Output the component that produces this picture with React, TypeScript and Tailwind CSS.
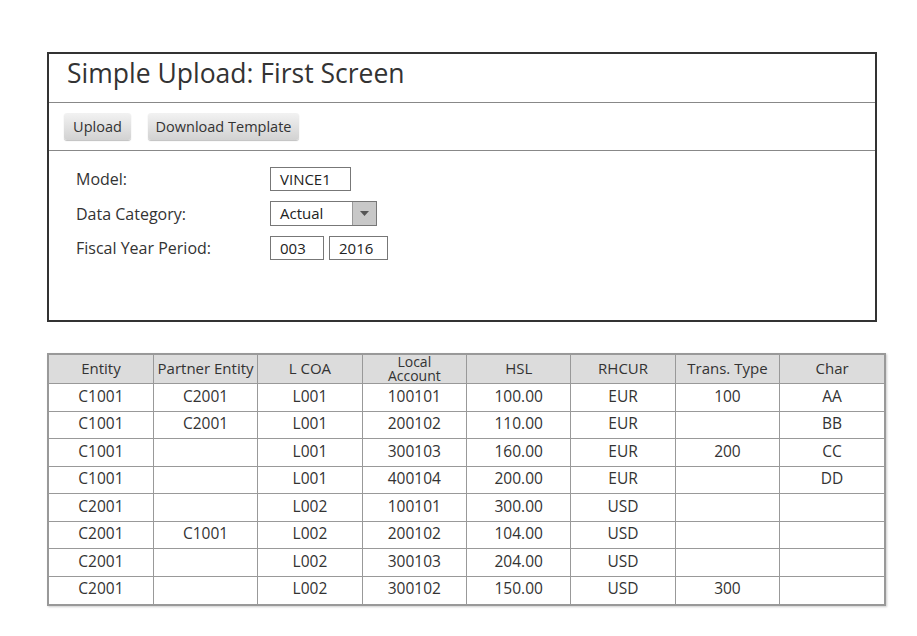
import React from "react";

const columns = ["Entity", "Partner Entity", "L COA", "Local Account", "HSL", "RHCUR", "Trans. Type", "Char"];

const rows = [
  ["C1001", "C2001", "L001", "100101", "100.00", "EUR", "100", "AA"],
  ["C1001", "C2001", "L001", "200102", "110.00", "EUR", "", "BB"],
  ["C1001", "", "L001", "300103", "160.00", "EUR", "200", "CC"],
  ["C1001", "", "L001", "400104", "200.00", "EUR", "", "DD"],
  ["C2001", "", "L002", "100101", "300.00", "USD", "", ""],
  ["C2001", "C1001", "L002", "200102", "104.00", "USD", "", ""],
  ["C2001", "", "L002", "300103", "204.00", "USD", "", ""],
  ["C2001", "", "L002", "300102", "150.00", "USD", "300", ""],
];

const Button = ({ label, width }: { label: string; width: string }) => (
  <button
    className={`${width} h-[27px] rounded-[3px] bg-gradient-to-b from-[#f2f2f2] to-[#d2d2d2] text-[14.5px] text-[#333] shadow-[0_1px_1px_rgba(0,0,0,0.25)]`}
  >
    {label}
  </button>
);

const Box = ({ value, width }: { value: string; width: string }) => (
  <div className={`${width} h-[24px] border border-[#777] bg-white pl-[9px] text-[15px] leading-[22px] text-[#222]`}>{value}</div>
);

export default function App() {
  return (
    <div className="min-h-[636px] w-[917px] bg-white pt-[52px] pl-[47px] text-[#333]" style={{ fontFamily: "'Open Sans', 'Noto Sans', sans-serif" }}>
      {/* Form panel */}
      <div className="h-[270px] w-[830px] border-2 border-[#333]">
        <div className="flex h-[49px] items-center border-b border-[#888] pb-[9px] pl-[18px]">
          <h1 className="text-[26.5px] text-[#333]">Simple Upload: First Screen</h1>
        </div>
        <div className="flex h-[48px] items-center gap-[17px] border-b border-[#888] pl-[15px]">
          <Button label="Upload" width="w-[67px]" />
          <Button label="Download Template" width="w-[151px]" />
        </div>
        <div className="flex flex-col gap-[10px] pt-[16px] pl-[27px] text-[16px]">
          <div className="flex items-center">
            <span className="w-[194px]">Model:</span>
            <Box value="VINCE1" width="w-[81px]" />
          </div>
          <div className="flex items-center">
            <span className="w-[194px]">Data Category:</span>
            <div className="flex h-[25px] w-[107px] border border-[#777] bg-white">
              <span className="flex-1 pl-[9px] text-[15px] leading-[23px] text-[#222]">Actual</span>
              <span className="flex w-[24px] items-center justify-center border-l border-[#999] bg-[#c8c8c8]">
                <svg width="9" height="5" viewBox="0 0 9 5">
                  <path d="M0 0h9L4.5 5z" fill="#555" />
                </svg>
              </span>
            </div>
          </div>
          <div className="flex items-center">
            <span className="w-[194px]">Fiscal Year Period:</span>
            <div className="flex gap-[5px]">
              <Box value="003" width="w-[54px]" />
              <Box value="2016" width="w-[59px]" />
            </div>
          </div>
        </div>
      </div>

      {/* Data table */}
      <div className="mt-[31px] w-[839px] border-2 border-[#999] shadow-[1px_1px_2px_rgba(0,0,0,0.2)]">
        <table className="w-full table-fixed border-collapse text-[15.5px] text-[#333]">
          <thead>
            <tr className="bg-[#dcdcdc]">
              {columns.map((c, i) => (
                <th key={c} className={`h-[28px] border-b border-[#999] p-0 text-[15px] font-normal ${i > 0 ? "border-l" : ""}`}>
                  {c === "Local Account" ? (
                    <div className="flex h-[28px] flex-col items-center justify-center text-[14px] leading-[14px]">
                      <span>Local</span>
                      <span>Account</span>
                    </div>
                  ) : (
                    <div className="flex h-[28px] items-center justify-center whitespace-nowrap pb-[2px]">{c}</div>
                  )}
                </th>
              ))}
            </tr>
          </thead>
          <tbody>
            {rows.map((r, ri) => (
              <tr key={ri}>
                {r.map((v, i) => (
                  <td
                    key={i}
                    className={`h-[27.5px] p-0 pb-[2px] text-center ${i > 0 ? "border-l border-[#999]" : ""} ${ri < rows.length - 1 ? "border-b border-[#999]" : ""}`}
                  >
                    {v}
                  </td>
                ))}
              </tr>
            ))}
          </tbody>
        </table>
      </div>
    </div>
  );
}
